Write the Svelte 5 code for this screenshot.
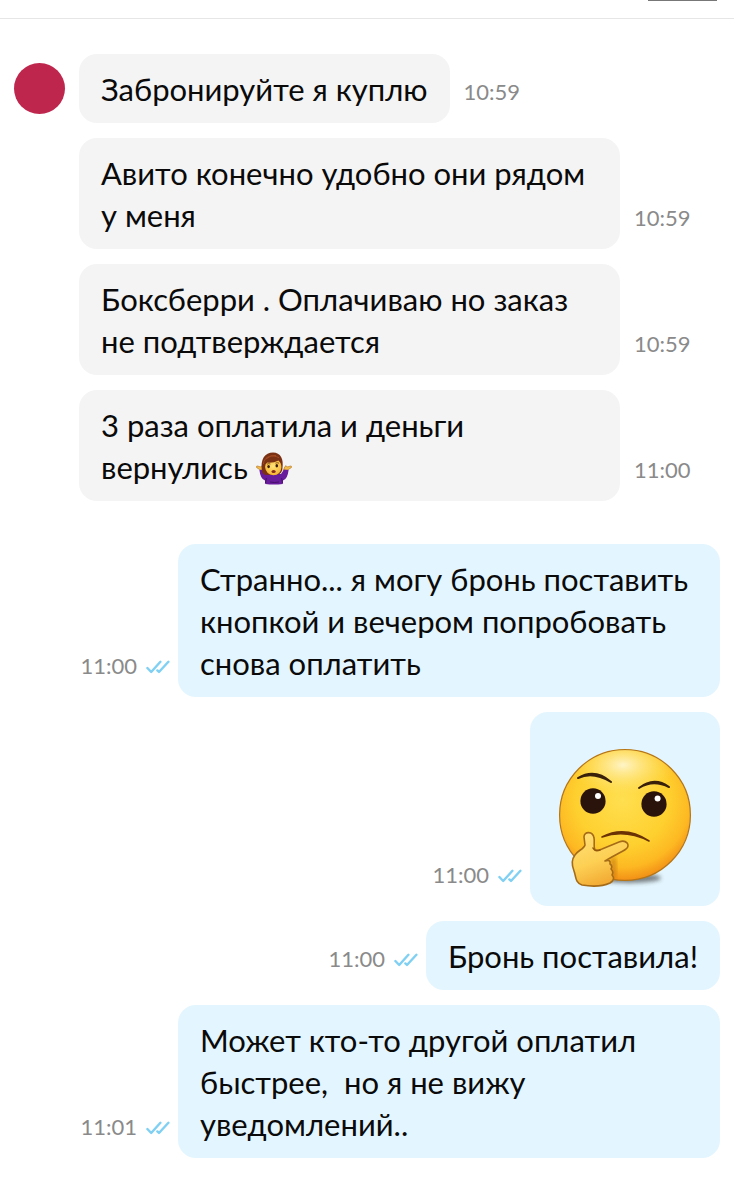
<script>
  const incoming = [
    { text: 'Забронируйте я куплю', time: '10:59' },
    { text: 'Авито конечно удобно они рядом у меня', time: '10:59' },
    { text: 'Боксберри . Оплачиваю но заказ не подтверждается', time: '10:59' },
    { text: '3 раза оплатила и деньги вернулись ', time: '11:00', shrug: true }
  ];
  const outgoing = [
    { text: 'Странно... я могу бронь поставить кнопкой и вечером попробовать снова оплатить', time: '11:00' },
    { sticker: true, time: '11:00' },
    { text: 'Бронь поставила!', time: '11:00' },
    { text: 'Может кто-то другой оплатил быстрее,  но я не вижу уведомлений..', time: '11:01' }
  ];
</script>

{#snippet shrugEmoji()}
  <svg class="shrug" viewBox="0 0 36 34" role="img" aria-label="🤷‍♀️">
    <defs>
      <radialGradient id="shrug-face" cx=".5" cy=".4" r=".65">
        <stop offset="0" stop-color="#ffe477" />
        <stop offset="1" stop-color="#f4af2c" />
      </radialGradient>
    </defs>
    <path d="M6 19 L0.6 15.6 Q0 13.8 1.6 14 L4.6 15 Q6 12.6 7 14.4 L9 19 Z" fill="#f4bd45" stroke="#a96b1c" stroke-width=".6" />
    <path d="M30 19 L35.4 15.6 Q36 13.8 34.4 14 L31.4 15 Q30 12.6 29 14.4 L27 19 Z" fill="#f4bd45" stroke="#a96b1c" stroke-width=".6" />
    <path d="M3.4 18 L8 17.4 L11 22 Q18 20 25 22 L28 17.4 L32.6 18 Q31.6 27 27 28.6 L26.6 32 Q18 33 9.4 32 L9 28.6 Q4.4 27 3.4 18 Z" fill="#681b9b" />
    <path d="M9.4 31.4 L10.4 26 M26.6 31.4 L25.6 26 M14 30 Q18 31 23 30" fill="none" stroke="#451067" stroke-width="1" />
    <path d="M6 19.6 C4 7 9 .6 17 .6 C24.6 .6 28 7 26.4 17 Q25.8 21.6 22 22.6 L10 23 Q6.6 22.6 6 19.6 Z" fill="#7a3114" />
    <path d="M9 15 Q9 12 11.4 10.6 Q18 11 22.4 8.4 Q25.6 11 25.4 15.4 Q24.6 22.8 17.4 23.2 Q10 22.6 9 15 Z" fill="url(#shrug-face)" />
    <path d="M7.4 12 C8 4 17 2 23 5.8 M10 7 Q15 2.6 20 3.4" fill="none" stroke="#a34a22" stroke-width="1" />
    <ellipse cx="12.6" cy="14.6" rx="1.3" ry="1.7" fill="#3b1b0d" />
    <ellipse cx="20.8" cy="13.8" rx="1.3" ry="1.7" fill="#3b1b0d" />
    <path d="M11 12.2 Q12.6 11.2 14.4 12 M19.4 11.2 Q21 10.2 23 11.2" fill="none" stroke="#5b2a10" stroke-width=".7" />
    <ellipse cx="17.6" cy="19.4" rx="2.1" ry="1.5" fill="#8a2a1a" />
  </svg>
{/snippet}

{#snippet thinkingSticker()}
  <svg class="thinking" viewBox="0 0 136 142" role="img" aria-label="🤔">
    <defs>
      <radialGradient id="face" cx=".48" cy=".38" r=".65">
        <stop offset="0" stop-color="#ffdf50" />
        <stop offset=".55" stop-color="#fed02f" />
        <stop offset=".8" stop-color="#fdb822" />
        <stop offset="1" stop-color="#ef8413" />
      </radialGradient>
      <radialGradient id="shine">
        <stop offset="0" stop-color="#fff6cf" stop-opacity=".95" />
        <stop offset="1" stop-color="#ffe36a" stop-opacity="0" />
      </radialGradient>
      <linearGradient id="hand" x1="0" y1="0" x2=".4" y2="1">
        <stop offset="0" stop-color="#ffe07a" />
        <stop offset=".6" stop-color="#fdd054" />
        <stop offset="1" stop-color="#f3ac35" />
      </linearGradient>
      <filter id="soft" x="-30%" y="-80%" width="160%" height="260%">
        <feGaussianBlur stdDeviation="2" />
      </filter>
      <clipPath id="head"><circle cx="68" cy="68" r="65" /></clipPath>
    </defs>
    <ellipse cx="72" cy="131" rx="32" ry="5" fill="#333" opacity=".6" filter="url(#soft)" />
    <circle cx="68" cy="68" r="65.4" fill="url(#face)" stroke="#b57516" stroke-width="1.2" />
    <ellipse cx="66" cy="18" rx="52" ry="30" fill="url(#shine)" clip-path="url(#head)" />
    <path d="M21 31 Q36 24 54 35 Q38 21 21 31 Z" fill="#38200b" stroke="#38200b" stroke-width="2" stroke-linejoin="round" />
    <path d="M82 41 Q96 32 112 40 Q97 29 82 41 Z" fill="#38200b" stroke="#38200b" stroke-width="2" stroke-linejoin="round" />
    <ellipse cx="36" cy="54" rx="12.6" ry="12.8" fill="#2a130a" />
    <ellipse cx="97" cy="57" rx="12.6" ry="12.8" fill="#2a130a" />
    <circle cx="41" cy="49" r="3" fill="#fff" />
    <circle cx="100.6" cy="51.6" r="3" fill="#fff" />
    <path d="M45 90 Q68 78 92 94 Q68 82 45 90 Z" fill="#6b3305" stroke="#6b3305" stroke-width="1.6" stroke-linejoin="round" />
    <path d="M54 111 L55 131 L58 132 Q60 118 58 110 Z" fill="#a55208" opacity=".5" filter="url(#soft)" />
    <path d="M27 90 C27 84 36 84 37 91 C38 95 36 99 38 103 C40 104 42 103 45 102 L62 95 C69 92 74 98 69 102 C65 105 54 110 48 114 Q54 112 53 117 Q56 119 54 122 Q57 125 55 128 Q59 132 53 136 Q42 141 25 138 C18 136 19 129 17 124 C15 119 14 113 18 108 C20 104 27 102 28 98 Z" fill="url(#hand)" stroke="#a66b17" stroke-width="1.6" stroke-linejoin="round" />
    <path d="M36 101 Q38 105 43 103" fill="none" stroke="#95590c" stroke-width="1.6" stroke-linecap="round" />
  </svg>
{/snippet}

{#snippet readTicks()}
  <svg class="ticks" viewBox="0 0 24 14" role="img" aria-label="Прочитано">
    <path d="M1.4 8 L5.2 12 L14.4 1.8 M11.4 10.4 L13 12 L22.4 1.8" />
  </svg>
{/snippet}

<header class="topbar"><span class="thumb"></span></header>

<main class="chat">
  <section class="group">
    <span class="avatar"></span>
    <div class="messages">
      {#each incoming as message}
        <div class="row">
          <p class="bubble">{message.text}{#if message.shrug}{@render shrugEmoji()}{/if}</p>
          <time>{message.time}</time>
        </div>
      {/each}
    </div>
  </section>

  <section class="messages own">
    {#each outgoing as message}
      <div class="row">
        <span class="status"><time>{message.time}</time>{@render readTicks()}</span>
        {#if message.sticker}
          <div class="bubble sticker">{@render thinkingSticker()}</div>
        {:else}
          <p class="bubble">{message.text}</p>
        {/if}
      </div>
    {/each}
  </section>
</main>

<style>
  :global(body) {
    background: #fff;
  }

  .topbar {
    display: flex;
    justify-content: flex-end;
    align-items: flex-start;
    box-sizing: border-box;
    height: 19px;
    padding-right: 17px;
    border-bottom: 1px solid #e6e6e6;
  }

  .thumb {
    width: 69px;
    height: 1px;
    background: #777;
  }

  .chat {
    display: flex;
    flex-direction: column;
    gap: 43px;
    padding: 35px 14px;
    font-family: Lato, "Noto Sans", sans-serif;
    color: #0a0a0a;
  }

  .group {
    display: flex;
    align-items: flex-start;
    gap: 14px;
  }

  .avatar {
    flex: none;
    width: 51px;
    height: 51px;
    margin-top: 9px;
    border-radius: 50%;
    background: #bf264e;
  }

  .messages {
    flex: 1;
    display: flex;
    flex-direction: column;
    gap: 15px;
  }

  .row {
    display: flex;
    align-items: flex-end;
    gap: 14px;
  }

  .bubble {
    box-sizing: border-box;
    max-width: calc(100% - 100px);
    margin: 0;
    padding: 14px 22px 13px;
    border-radius: 18px;
    background: #f4f4f4;
    font-size: 31px;
    line-height: 42px;
    white-space: pre-wrap;
  }

  time {
    flex: none;
    padding-bottom: 17px;
    font-size: 22px;
    line-height: 28px;
    color: #8a8a8a;
  }

  .own .row {
    justify-content: flex-end;
    gap: 8px;
  }

  .own .bubble {
    max-width: calc(100% - 164px);
    background: #e3f5fe;
  }

  .own .sticker {
    display: flex;
    width: 190px;
    padding: 35px 27px 17px;
  }

  .status {
    flex: none;
    display: flex;
    align-items: flex-end;
    gap: 9px;
  }

  .ticks {
    width: 24px;
    height: 14px;
    margin-bottom: 23px;
    fill: none;
    stroke: #7fd0f3;
    stroke-width: 2.4;
    stroke-linecap: round;
    stroke-linejoin: round;
  }

  .shrug {
    width: 36px;
    height: 34px;
    vertical-align: -7px;
  }

  .thinking {
    width: 136px;
    height: 142px;
  }
</style>
